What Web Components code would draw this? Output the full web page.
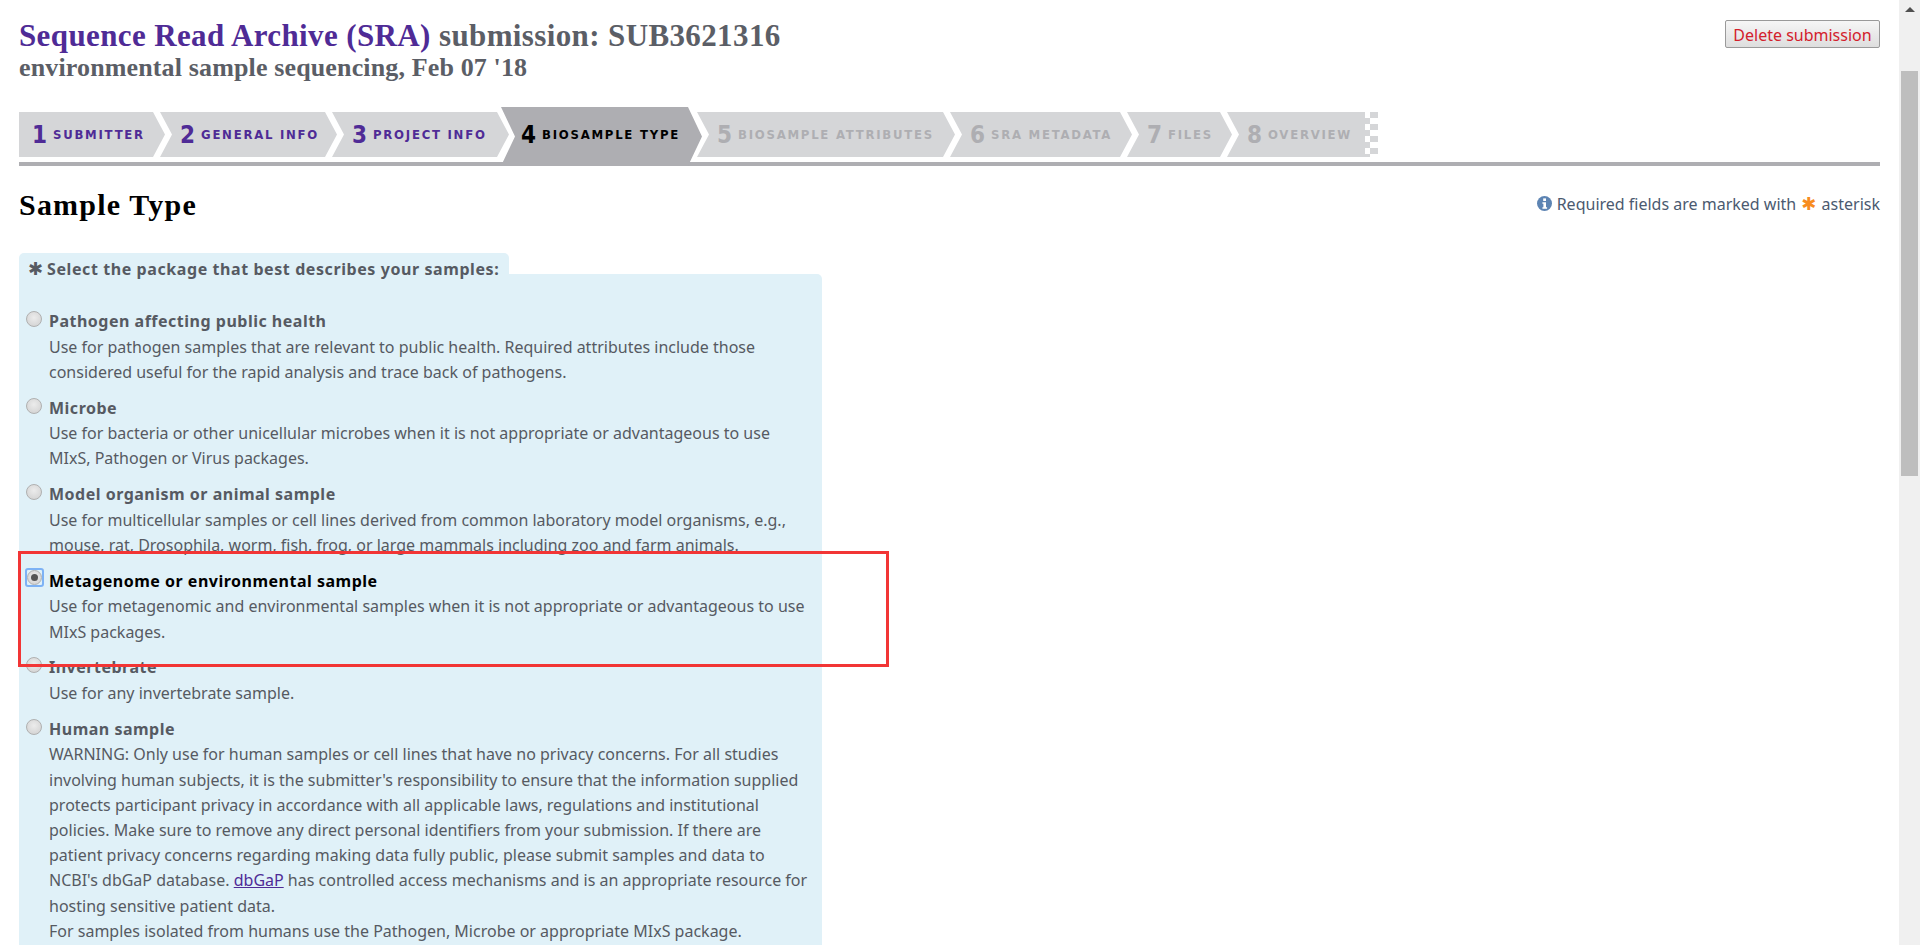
<!DOCTYPE html>
<html>
<head>
<meta charset="utf-8">
<title>SRA submission</title>
<style>
html, body { margin: 0; height: 100%; overflow: hidden; background: #fff; }
body { font-family: "Noto Sans", "Liberation Sans", sans-serif; }
</style>
</head>
<body>
<sra-page>
  <sra-header slot="top"></sra-header>
  <sra-stepper slot="top">
    <sra-step num="1" w="146" state="done" first>SUBMITTER</sra-step>
    <sra-step num="2" w="177" state="done">GENERAL INFO</sra-step>
    <sra-step num="3" w="177" overlap="8" state="done">PROJECT INFO</sra-step>
    <sra-step num="4" w="201" state="current">BIOSAMPLE TYPE</sra-step>
    <sra-step num="5" w="258" state="todo">BIOSAMPLE ATTRIBUTES</sra-step>
    <sra-step num="6" w="182" state="todo">SRA METADATA</sra-step>
    <sra-step num="7" w="105" state="todo">FILES</sra-step>
    <sra-step num="8" w="138" state="todo" last>OVERVIEW</sra-step>
  </sra-stepper>
  <sra-section-title slot="top"></sra-section-title>
  <sra-panel>
    <sra-package name="Pathogen affecting public health">Use for pathogen samples that are relevant to public health. Required attributes include those<br>considered useful for the rapid analysis and trace back of pathogens.</sra-package>
    <sra-package name="Microbe">Use for bacteria or other unicellular microbes when it is not appropriate or advantageous to use<br>MIxS, Pathogen or Virus packages.</sra-package>
    <sra-package name="Model organism or animal sample">Use for multicellular samples or cell lines derived from common laboratory model organisms, e.g.,<br>mouse, rat, Drosophila, worm, fish, frog, or large mammals including zoo and farm animals.</sra-package>
    <sra-package name="Metagenome or environmental sample" checked>Use for metagenomic and environmental samples when it is not appropriate or advantageous to use<br>MIxS packages.</sra-package>
    <sra-package name="Invertebrate">Use for any invertebrate sample.</sra-package>
    <sra-package name="Human sample">WARNING: Only use for human samples or cell lines that have no privacy concerns. For all studies<br>involving human subjects, it is the submitter's responsibility to ensure that the information supplied<br>protects participant privacy in accordance with all applicable laws, regulations and institutional<br>policies. Make sure to remove any direct personal identifiers from your submission. If there are<br>patient privacy concerns regarding making data fully public, please submit samples and data to<br>NCBI's dbGaP database. <a href="#">dbGaP</a> has controlled access mechanisms and is an appropriate resource for<br>hosting sensitive patient data.<br>For samples isolated from humans use the Pathogen, Microbe or appropriate MIxS package.</sra-package>
  </sra-panel>
  <sra-callout></sra-callout>
</sra-page>

<script>
class SraPage extends HTMLElement {
  constructor() {
    super();
    this.attachShadow({ mode: 'open' }).innerHTML = `
<style>
:host { display: flex; height: 945px; overflow: hidden; position: relative; }
.main { width: 1861px; padding-left: 19px; flex: none; }
.gap { width: 19px; flex: none; }
.bar { width: 21px; flex: none; background: #f0f0f0; box-sizing: border-box; padding: 0 2px; }
.arrow { height: 71px; position: relative; }
.arrow i { display: block; width: 0; height: 0; margin: 0 auto; border: 5px solid transparent; border-top: 0; border-bottom: 5px solid #505050; position: relative; top: 7px; }
.thumb { height: 405px; background: #bebebe; }
</style>
<div class="main"><slot name="top"></slot><slot></slot></div>
<div class="gap"></div>
<div class="bar"><div class="arrow"><i></i></div><div class="thumb"></div></div>`;
  }
}

class SraHeader extends HTMLElement {
  constructor() {
    super();
    this.attachShadow({ mode: 'open' }).innerHTML = `
<style>
:host { display: flex; justify-content: space-between; align-items: flex-start; height: 107px; font-family: "Liberation Serif", serif; font-weight: bold; color: #5b5e66; }
h1 { margin: 0; padding-top: 19px; font-size: 31px; line-height: 34px; font-weight: bold; letter-spacing: .38px; }
h1 span { color: #4f2b96; }
h2 { margin: 0; font-size: 26px; line-height: 30px; font-weight: bold; letter-spacing: .14px; }
button { margin-top: 20px; width: 155px; height: 28px; box-sizing: border-box; padding: 1px 0 0; border: 1px solid #9a9a9a; border-radius: 2px; background: linear-gradient(#f6f6f6, #dedede); color: #d3202c; font: 16px "Noto Sans", sans-serif; line-height: 24px; }
</style>
<div><h1><span>Sequence Read Archive (SRA)</span> submission: SUB3621316</h1><h2>environmental sample sequencing, Feb 07 '18</h2></div>
<button>Delete submission</button>`;
  }
}

class SraStepper extends HTMLElement {
  constructor() {
    super();
    this.attachShadow({ mode: 'open' }).innerHTML = `
<style>
:host { display: flex; height: 59px; box-shadow: inset 0 -4px 0 #aeaeb2; }
</style>
<slot></slot>`;
  }
}

class SraStep extends HTMLElement {
  constructor() {
    super();
    const state = this.getAttribute('state');
    const first = this.hasAttribute('first');
    const last = this.hasAttribute('last');
    const current = state === 'current';
    const top = current ? 0 : 5, bottom = current ? 59 : 50, mid = (top + bottom) / 2;
    const tip = current ? 14 : 12;
    const shape = last
      ? `0 ${top}px, 100% ${top}px, 100% ${bottom}px, 0 ${bottom}px, ${tip}px ${mid}px`
      : first
      ? `0 ${top}px, calc(100% - ${tip}px) ${top}px, 100% ${mid}px, calc(100% - ${tip}px) ${bottom}px, 0 ${bottom}px`
      : `0 ${top}px, calc(100% - ${tip}px) ${top}px, 100% ${mid}px, calc(100% - ${tip}px) ${bottom}px, 0 ${bottom}px, ${tip}px ${mid}px`;
    const colors = { done: ['#d5d6d8', '#4f2b96'], current: ['#aeaeb2', '#000'], todo: ['#d5d6d8', '#aeaeb2'] }[state];
    this.attachShadow({ mode: 'open' }).innerHTML = `
<style>
:host { display: block; flex: none; width: ${this.getAttribute('w')}px; height: 59px; margin-right: -${this.getAttribute('overlap') || 5}px; position: relative; color: ${colors[1]}; }
.box { display: flex; align-items: center; height: 59px; box-sizing: border-box; padding: 0 0 4px ${first ? 13 : 20}px; white-space: nowrap; background: ${colors[0]}; clip-path: polygon(${shape}); }
b { font: bold 24px "DejaVu Sans", sans-serif; font-stretch: condensed; margin-right: 6px; line-height: 1; }
span { font: bold 13px "DejaVu Sans", sans-serif; font-stretch: condensed; letter-spacing: 1.75px; }
.check { position: absolute; left: 100%; top: 5px; width: 13px; height: 45px; background:
  linear-gradient(#fff 50%, #d5d6d8 0) 0 0 / 5px 12px repeat-y,
  linear-gradient(#d5d6d8 50%, #fff 0) 5px 0 / 8px 12px repeat-y; }
</style>
<div class="box"><b>${this.getAttribute('num')}</b><span><slot></slot></span></div>
${last ? '<div class="check"></div>' : ''}`;
  }
}

class SraSectionTitle extends HTMLElement {
  constructor() {
    super();
    this.attachShadow({ mode: 'open' }).innerHTML = `
<style>
:host { display: flex; justify-content: space-between; align-items: center; height: 87px; }
h3 { margin: 0; font: bold 30px "Liberation Serif", serif; color: #000; letter-spacing: 1.2px; position: relative; top: -5px; }
.req { display: flex; align-items: center; gap: 5px; font-size: 16px; line-height: 22px; color: #4b5a70; position: relative; top: -6px; }
svg { display: block; }
em { font: bold 18px/0 "DejaVu Sans", sans-serif; color: #f78c1e; margin: 0 1px; }
</style>
<h3>Sample Type</h3>
<div class="req">
  <svg width="15" height="15" viewBox="0 0 15 15"><circle cx="7.5" cy="7.5" r="7.5" fill="#5d84b3"/><rect x="6.2" y="2.4" width="2.8" height="2.6" fill="#fff"/><path d="M5.4 6.2h3.6v5h1.1v1.5H5.4v-1.5h1v-3.5h-1z" fill="#fff"/></svg>
  <span>Required fields are marked with <em>✱</em> asterisk</span>
</div>`;
  }
}

class SraPanel extends HTMLElement {
  constructor() {
    super();
    this.attachShadow({ mode: 'open' }).innerHTML = `
<style>
:host { display: block; width: 803px; position: relative; color: #565a62; }
.legend { width: 490px; height: 30px; background: #e0f1f8; border-radius: 5px 5px 0 0; box-sizing: border-box; padding: 5px 0 0 9px; font-weight: bold; font-size: 16px; letter-spacing: .58px; line-height: 22px; white-space: nowrap; }
.legend i { font: bold 18px/0 "DejaVu Sans", sans-serif; letter-spacing: 0; margin-right: 4px; }
.body { background: #e0f1f8; border-radius: 0 5px 0 0; margin-top: -9px; padding-top: 34px; min-height: 680px; }
</style>
<div class="legend"><i>✱</i>Select the package that best describes your samples:</div>
<div class="body"><slot></slot></div>`;
  }
}

class SraPackage extends HTMLElement {
  constructor() {
    super();
    const on = this.hasAttribute('checked');
    this.attachShadow({ mode: 'open' }).innerHTML = `
<style>
:host { display: block; position: relative; padding: 0 0 9.6px 30px; }
.ring { position: absolute; left: 7px; top: 3px; width: 16px; height: 16px; box-sizing: border-box; border: 1px solid #b0b0b0; border-radius: 50%; background: radial-gradient(circle at 50% 40%, #ececec, #cfcfcf); }
.on { left: 8px; top: 2px; width: 15px; height: 15px; }
.on::before { content: ""; position: absolute; inset: -3px; border: 2px solid #7db2f5; border-radius: 3px; }
.dot { width: 7px; height: 7px; margin: 3px; border-radius: 50%; background: #555; }
.name { font-weight: bold; font-size: 16px; letter-spacing: .5px; line-height: 26.6px; color: ${on ? '#000' : '#565a62'}; }
.desc { font-size: 16px; line-height: 25.2px; white-space: nowrap; }
::slotted(a) { color: #4f2b96; }
</style>
<div class="ring ${on ? 'on' : ''}">${on ? '<div class="dot"></div>' : ''}</div>
<div class="name">${this.getAttribute('name')}</div>
<div class="desc"><slot></slot></div>`;
  }
}

class SraCallout extends HTMLElement {
  constructor() {
    super();
    this.attachShadow({ mode: 'open' }).innerHTML = `
<style>
:host { display: block; position: absolute; left: 18px; top: 551px; width: 871px; height: 116px; box-sizing: border-box; border: 3px solid #f23535; pointer-events: none; }
</style>`;
  }
}

customElements.define('sra-page', SraPage);
customElements.define('sra-header', SraHeader);
customElements.define('sra-stepper', SraStepper);
customElements.define('sra-step', SraStep);
customElements.define('sra-section-title', SraSectionTitle);
customElements.define('sra-panel', SraPanel);
customElements.define('sra-package', SraPackage);
customElements.define('sra-callout', SraCallout);
</script>
</body>
</html>
